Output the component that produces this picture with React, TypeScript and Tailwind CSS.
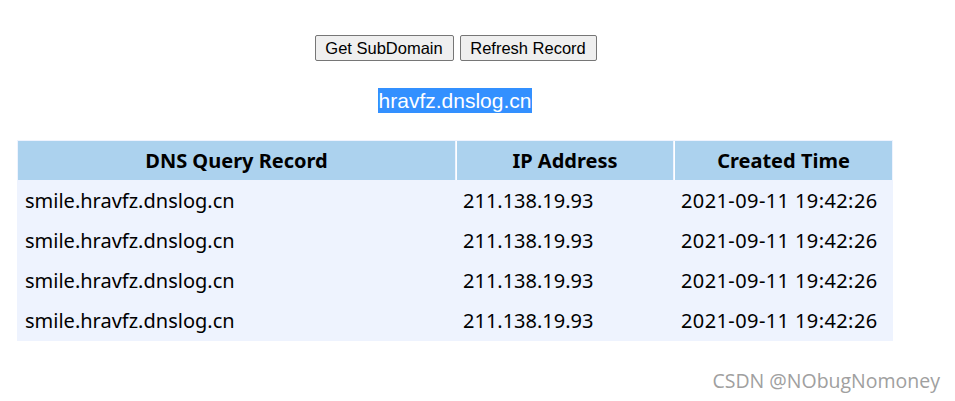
import React from 'react';

const rows = [
  { domain: 'smile.hravfz.dnslog.cn', ip: '211.138.19.93', time: '2021-09-11 19:42:26' },
  { domain: 'smile.hravfz.dnslog.cn', ip: '211.138.19.93', time: '2021-09-11 19:42:26' },
  { domain: 'smile.hravfz.dnslog.cn', ip: '211.138.19.93', time: '2021-09-11 19:42:26' },
  { domain: 'smile.hravfz.dnslog.cn', ip: '211.138.19.93', time: '2021-09-11 19:42:26' },
];

export default function App() {
  return (
    <div className="relative w-[955px] h-[401px] bg-white overflow-hidden">
      <div className="w-[876px] ml-[17px] pt-[35px]">
        {/* buttons */}
        <div className="flex justify-center gap-[6px] pl-[1px]">
          <button className="h-[26px] w-[139px] bg-[#efefef] border border-[#767676] rounded-[2px] text-[16.5px] text-black font-['Liberation_Sans',sans-serif]">
            Get SubDomain
          </button>
          <button className="h-[26px] w-[137px] bg-[#efefef] border border-[#767676] rounded-[2px] text-[16.5px] text-black font-['Liberation_Sans',sans-serif]">
            Refresh Record
          </button>
        </div>

        {/* current domain */}
        <div className="flex justify-center mt-[27px]">
          <span className="bg-[#3390ff] text-white text-[21px] leading-[25px] px-[1px] font-['Liberation_Sans',sans-serif]">
            hravfz.dnslog.cn
          </span>
        </div>

        {/* records */}
        <table className="mt-[27px] w-full bg-[#eef3fe] border-separate border-spacing-[1px] text-[20px] text-black font-['Noto_Sans',sans-serif]">
          <thead>
            <tr className="bg-[#acd2ee]">
              <th className="w-[437px] h-[39px] font-bold">DNS Query Record</th>
              <th className="w-[217px] font-bold border-l border-white">IP Address</th>
              <th className="font-bold border-l border-white">Created Time</th>
            </tr>
          </thead>
          <tbody>
            {rows.map((r, i) => (
              <tr key={i} className="h-[39px]">
                <td className="pl-[7px] p-0 font-normal">{r.domain}</td>
                <td className="pl-[7px] p-0">{r.ip}</td>
                <td className="pl-[7px] p-0 tracking-[0.4px]">{r.time}</td>
              </tr>
            ))}
          </tbody>
        </table>
      </div>

      {/* watermark */}
      <div className="absolute right-[15px] top-[366px] text-[19.5px] text-[#a0a0a0] font-['Open_Sans',sans-serif]">
        CSDN @NObugNomoney
      </div>
    </div>
  );
}
